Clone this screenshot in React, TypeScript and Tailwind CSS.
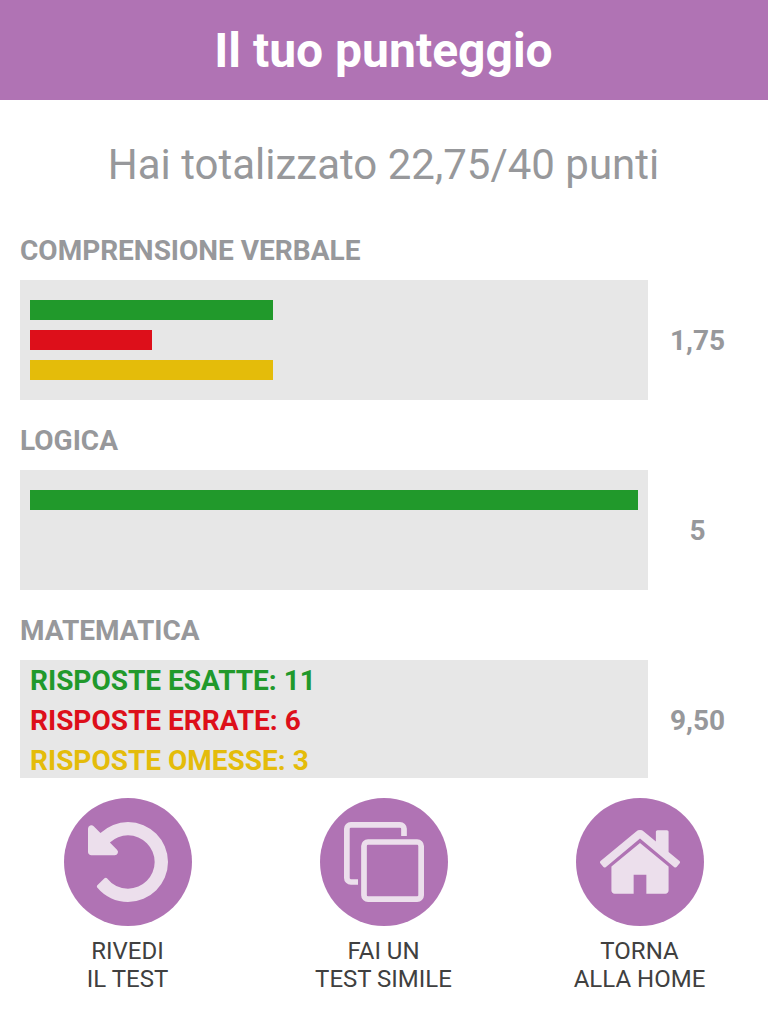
import type { ReactNode } from "react";

type Section = {
  title: string;
  score: string;
  correct: number;
  wrong: number;
  skipped: number;
  expanded?: boolean;
};

const sections: Section[] = [
  {
    title: "COMPRENSIONE VERBALE",
    score: "1,75",
    correct: 2,
    wrong: 1,
    skipped: 2,
  },
  { title: "LOGICA", score: "5", correct: 5, wrong: 0, skipped: 0 },
  {
    title: "MATEMATICA",
    score: "9,50",
    correct: 11,
    wrong: 6,
    skipped: 3,
    expanded: true,
  },
];

function UndoIcon() {
  return (
    <svg viewBox="128 128 1536 1536" className="size-20 fill-current">
      <path d="M1664 896q0 156-61 298t-164 245-245 164-298 61q-172 0-327-72.5t-264-204.5q-7-10-6.5-22.5t8.5-20.5l137-138q10-9 25-9 16 2 23 12 73 95 179 147t225 52q104 0 198.5-40.5t163.5-109.5 109.5-163.5 40.5-198.5-40.5-198.5-109.5-163.5-163.5-109.5-198.5-40.5q-98 0-188 35.5t-160 101.5l137 138q31 30 14 69-17 40-59 40h-448q-26 0-45-19t-19-45v-448q0-42 40-59 39-17 69 14l130 129q107-101 244.5-156.5t284.5-55.5q156 0 298 61t245 164 164 245 61 298z" />
    </svg>
  );
}

function CopyIcon() {
  return (
    <svg
      viewBox="0 0 80 80"
      fill="none"
      stroke="currentColor"
      strokeWidth="5.7"
      className="size-20"
    >
      <path d="M60 14V6.86a4 4 0 0 0-4-4H6.86a4 4 0 0 0-4 4V56a4 4 0 0 0 4 4H14" />
      <rect x="20" y="20" width="57.14" height="57.14" rx="4" />
    </svg>
  );
}

function HomeIcon() {
  return (
    <svg viewBox="90 90 1612 1612" className="size-20 fill-current">
      <path d="M1472 992v480q0 26-19 45t-45 19h-384v-384h-256v384h-384q-26 0-45-19t-19-45v-480q0-1 .5-3t.5-3l575-474 575 474q1 2 1 6zm223-69l-62 74q-8 9-21 11h-3q-13 0-21-7l-692-577-692 577q-12 8-24 7-13-2-21-11l-62-74q-8-10-7-23.5t11-21.5l719-599q32-26 76-26t76 26l244 204v-195q0-14 9-23t23-9h192q14 0 23 9t9 23v408l219 182q10 8 11 21.5t-7 23.5z" />
    </svg>
  );
}

function Bar({ value, total, color }: { value: number; total: number; color: string }) {
  return (
    <div
      className={`h-5 ${color}`}
      style={{ width: `${(value / total) * 100}%` }}
    />
  );
}

function ScoreSection({ title, score, correct, wrong, skipped, expanded }: Section) {
  const total = correct + wrong + skipped;

  return (
    <section className="mb-5 text-[28px] font-bold text-[#97989b]">
      <h3 className="mb-2.5 h-10 leading-[42px]">{title}</h3>
      <div className="flex">
        {expanded ? (
          <div className="h-[120px] flex-1 bg-[#e7e7e7] px-2.5 pt-px leading-10">
            <p className="text-[#21992b]">RISPOSTE ESATTE: {correct}</p>
            <p className="text-[#dd0f1a]">RISPOSTE ERRATE: {wrong}</p>
            <p className="text-[#e4bc0a]">RISPOSTE OMESSE: {skipped}</p>
          </div>
        ) : (
          <div className="flex h-[120px] flex-1 flex-col gap-2.5 bg-[#e7e7e7] px-2.5 py-5">
            <Bar value={correct} total={total} color="bg-[#21992b]" />
            <Bar value={wrong} total={total} color="bg-[#dd0f1a]" />
            <Bar value={skipped} total={total} color="bg-[#e4bc0a]" />
          </div>
        )}
        <div className="flex w-[100px] items-center justify-center pt-0.5 pr-px">{score}</div>
      </div>
    </section>
  );
}

function Action({ icon, children }: { icon: ReactNode; children: ReactNode }) {
  return (
    <button className="flex flex-col items-center text-2xl leading-7 text-[#404040]">
      <span className="mb-[11px] flex size-32 items-center justify-center rounded-full bg-[#b073b4] text-[#ecdfec]">
        {icon}
      </span>
      <span className="flex flex-col items-center pr-px">{children}</span>
    </button>
  );
}

export default function App() {
  return (
    <div className="flex h-screen flex-col overflow-hidden bg-white font-['Roboto',sans-serif]">
      <header className="h-[100px] shrink-0 bg-[#b073b4] pr-px text-center text-5xl leading-[102px] font-bold text-white">
        Il tuo punteggio
      </header>
      <main className="min-h-0 flex-1 overflow-hidden px-5">
        <h2 className="h-[130px] pr-px text-center text-[42px] leading-[130px] text-[#97989b]">
          Hai totalizzato 22,75/40 punti
        </h2>
        {sections.map((section) => (
          <ScoreSection key={section.title} {...section} />
        ))}
      </main>
      <footer className="grid h-[246px] shrink-0 grid-cols-3 items-start bg-white pt-5">
        <Action icon={<UndoIcon />}>
          <span>RIVEDI</span>
          <span>IL TEST</span>
        </Action>
        <Action icon={<CopyIcon />}>
          <span>FAI UN</span>
          <span>TEST SIMILE</span>
        </Action>
        <Action icon={<HomeIcon />}>
          <span>TORNA</span>
          <span>ALLA HOME</span>
        </Action>
      </footer>
    </div>
  );
}
